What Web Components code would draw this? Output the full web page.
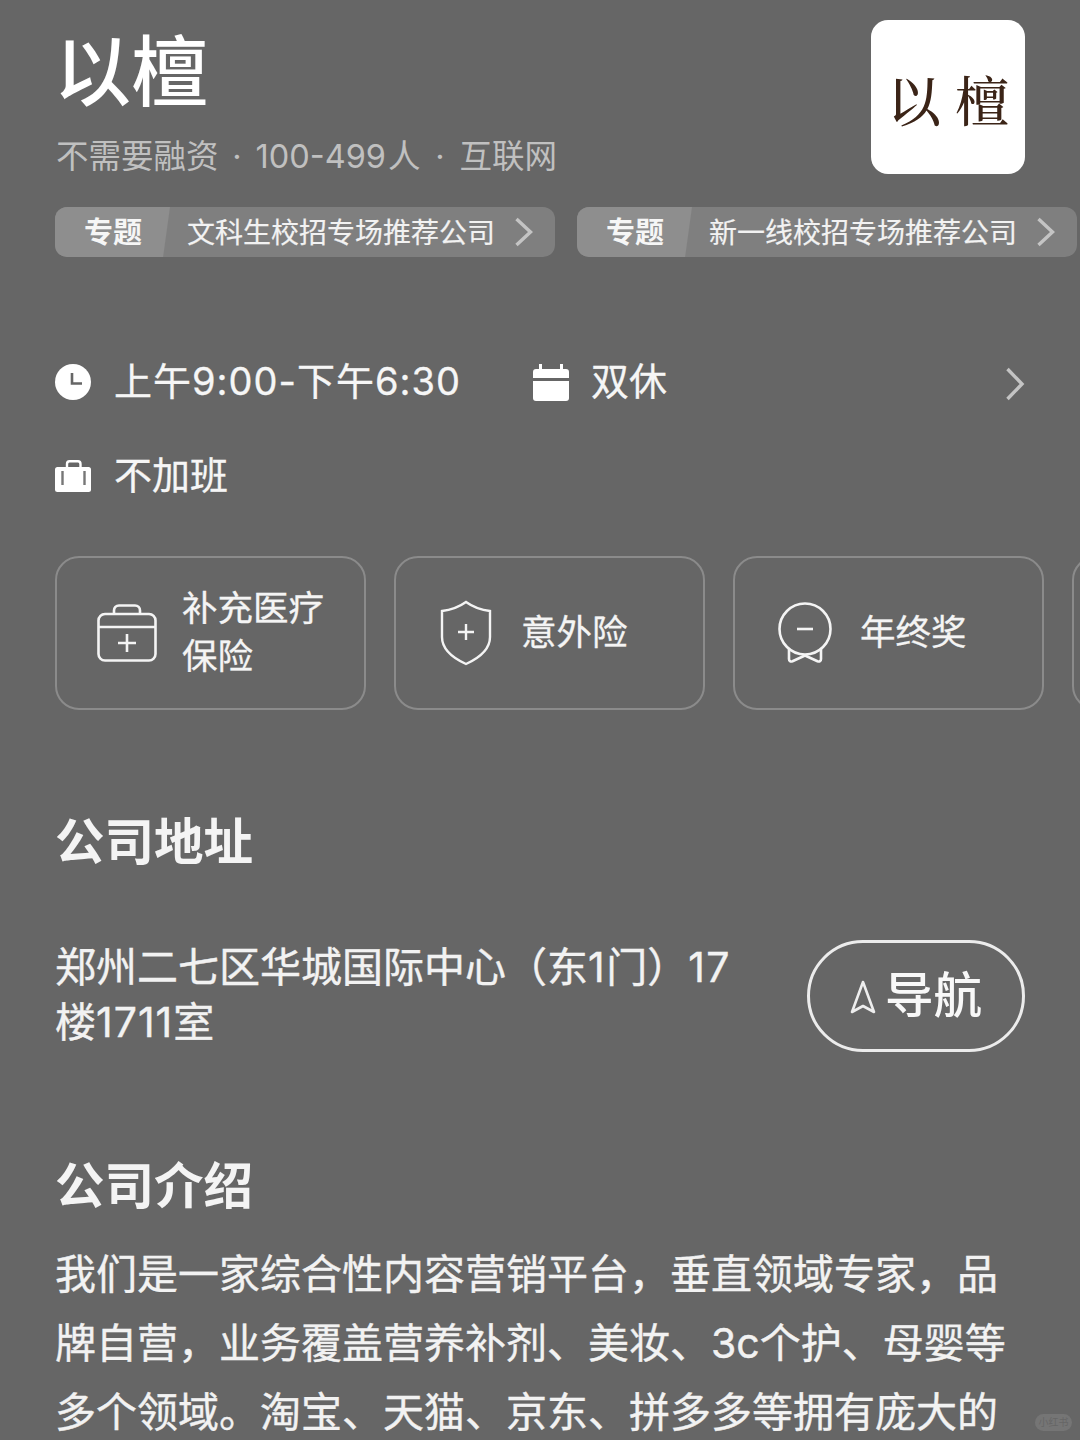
<!DOCTYPE html>
<html lang="zh-CN">
<head>
<meta charset="utf-8">
<title>以檀</title>
<style>
  html, body { margin: 0; height: 1440px; overflow: hidden; background: #666; }
  body { font-family: Inter, "Noto Sans CJK SC", sans-serif; color: #f4f4f4; }
</style>
</head>
<body>
<company-page>
  <company-header name="以檀" logo="以 檀"></company-header>
  <tag-row>
    <topic-tag>文科生校招专场推荐公司</topic-tag>
    <topic-tag>新一线校招专场推荐公司</topic-tag>
  </tag-row>
  <work-info></work-info>
  <benefit-row>
    <benefit-card icon="kit">补充医疗<br>保险</benefit-card>
    <benefit-card icon="shield">意外险</benefit-card>
    <benefit-card icon="medal">年终奖</benefit-card>
    <benefit-card></benefit-card>
  </benefit-row>
  <section-title style="margin-top:102px">公司地址</section-title>
  <address-block>郑州二七区华城国际中心（东<span style="letter-spacing:1.5px">1</span>门）<span style="letter-spacing:1.5px">17</span>楼<span style="letter-spacing:1px">1711</span>室</address-block>
  <section-title style="margin-top:104px">公司介绍</section-title>
  <intro-text>我们是一家综合性内容营销平台，垂直领域专家，品牌自营，业务覆盖营养补剂、美妆、3c个护、母婴等多个领域。淘宝、天猫、京东、拼多多等拥有庞大的</intro-text>
  <water-mark>小红书</water-mark>
</company-page>

<script>
const FONT = 'Inter, "Noto Sans CJK SC", sans-serif';

function define(tag, css, html, setup) {
  customElements.define(tag, class extends HTMLElement {
    constructor() {
      super();
      this.attachShadow({ mode: "open" });
    }
    connectedCallback() {
      const markup = typeof html === "function" ? html(this) : html;
      this.shadowRoot.innerHTML = `<style>${css}</style>${markup}`;
      if (setup) setup(this);
    }
  });
}

const ICONS = {
  kit: `<svg width="60" height="58" viewBox="0 0 60 58" fill="none" stroke="#f4f4f4" stroke-width="2.6">
    <path d="M17 10V6.500C17 3.500 19 1.500 22 1.500H38C41 1.500 43 3.500 43 6.500V10"/>
    <rect x="1.500" y="10" width="57" height="46.500" rx="6.500"/>
    <path d="M1.500 23H58.500M30 30V48M21 39H39"/>
  </svg>`,
  shield: `<svg width="52" height="66" viewBox="0 0 52 66" fill="none" stroke="#f4f4f4" stroke-width="2.4">
    <path d="M26 2C33 7 41 10 50 11V37C50 51 37 59 26 64C15 59 2 51 2 37V11C11 10 19 7 26 2Z"/>
    <path d="M26 24V40M18 32H34"/>
  </svg>`,
  medal: `<svg width="56" height="62" viewBox="0 0 56 62" fill="none" stroke="#f4f4f4" stroke-width="2.6">
    <circle cx="28" cy="27" r="25.500"/>
    <path d="M20 27H36"/>
    <path d="M12 47V57C12 59 13.500 60 15.500 59.200L28 53.500L40.500 59.200C42.500 60 44 59 44 57V47"/>
  </svg>`
};

define("company-page", `
  :host { display: block; position: relative; height: 1440px; overflow: hidden; }
`, `<slot></slot>`);

define("company-header", `
  :host { display: flex; justify-content: space-between; align-items: flex-start; padding: 20px 55px 0 55px; }
  .left { padding-top: 12px; }
  h1 { margin: 0 0 0 -1px; font: 500 77px/80px ${FONT}; color: #fff; }
  p { margin: 23px 0 0 1px; font: 400 32.5px/44px ${FONT}; color: #c0c0c0; white-space: pre; }
  .dot { display: inline-block; width: 37px; text-align: center; }
  .dot.wide { width: 39px; }
  .ren { margin-left: 2px; }
  .logo { width: 154px; height: 154px; border-radius: 17px; background: #fff; display: flex; align-items: center; justify-content: center; padding-top: 4px; box-sizing: border-box;
    font: 500 54px/1 "Noto Serif CJK SC", "Noto Sans CJK SC", serif; color: #3b2417; white-space: pre; }
`, el => `
  <div class="left">
    <h1>${el.getAttribute("name")}</h1>
    <p>不需要融资<span class="dot">·</span>100-499<span class="ren">人</span><span class="dot wide">·</span>互联网</p>
  </div>
  <div class="logo">${el.getAttribute("logo")}</div>
`);

define("tag-row", `
  :host { display: flex; gap: 22px; padding-left: 55px; margin-top: 28px; }
`, `<slot></slot>`);

define("topic-tag", `
  :host { display: flex; flex: 0 0 500px; height: 50px; align-items: center; position: relative; border-radius: 12px; background: #7f7f7f; overflow: hidden; box-sizing: border-box; }
  .label { position: absolute; left: 0; top: 0; height: 100%; width: 115px; background: #8e8e8e; clip-path: polygon(0 0, 100% 0, 94% 100%, 0 100%);
    display: flex; align-items: center; padding-left: 29px; box-sizing: border-box; font: 700 29px/1 ${FONT}; color: #f6f6f6; }
  .text { margin-left: 132px; font: 400 28px/50px ${FONT}; color: #f2f2f2; white-space: nowrap; padding-top: 1px; -webkit-text-stroke: 0.2px #f2f2f2; }
  svg { position: absolute; left: 459px; top: 10px; }
`, `
  <div class="label">专题</div>
  <div class="text"><slot></slot></div>
  <svg width="20" height="30" viewBox="0 0 20 30" fill="none" stroke="#c4c4c4" stroke-width="3.4"><path d="M2.500 2L16.500 15L2.500 28"/></svg>
`);

define("work-info", `
  :host { display: block; padding: 0 55px; margin-top: 100px; font: 400 38px/48px ${FONT}; color: #f6f6f6; -webkit-text-stroke: 0.3px #f6f6f6; }
  .row { display: flex; align-items: center; height: 48px; }
  .row + .row { margin-top: 46px; }
  .row > svg, .item svg { position: relative; top: 1px; }
  .item { display: flex; align-items: center; gap: 23px; white-space: nowrap; }
  .time { flex: 0 0 478px; }
  .time span { letter-spacing: 1px; }
  .item + .item { gap: 22px; }
  .more { margin-left: auto; margin-top: 4px; }
  svg { display: block; flex: none; }
`, `
  <div class="row">
    <div class="item time">
      <svg width="36" height="36" viewBox="0 0 36 36"><circle cx="18" cy="18" r="18" fill="#fff"/><path d="M17 9V19.500H27" fill="none" stroke="#666" stroke-width="2.600"/></svg>
      <span>上午9:00-下午6:30</span>
    </div>
    <div class="item">
      <svg width="36" height="37" viewBox="0 0 36 37" fill="#fff">
        <path d="M6 0h3v5h18v-5h3v5h3c2 0 3 1 3 3v6H0v-6c0-2 1-3 3-3h3z"/>
        <path d="M0 17h36v17c0 2-1 3-3 3H3c-2 0-3-1-3-3z"/>
      </svg>
      <span>双休</span>
    </div>
    <svg class="more" width="20" height="34" viewBox="0 0 20 34" fill="none" stroke="#c4c4c4" stroke-width="3.400"><path d="M2.500 2L17 17L2.500 32"/></svg>
  </div>
  <div class="row">
    <div class="item">
      <svg width="36" height="32" viewBox="0 0 36 32">
        <path fill="none" stroke="#fff" stroke-width="2.400" d="M12 8V4C12 2.500 13 1.200 14.500 1.200H23C24.500 1.200 25.500 2.500 25.500 4V8"/>
        <rect y="7" width="36" height="25" rx="2.500" fill="#fff"/>
        <path d="M7.500 11V25M29.500 11V25" stroke="#777" stroke-width="2.400"/>
      </svg>
      <span>不加班</span>
    </div>
  </div>
`);

define("benefit-row", `
  :host { display: flex; gap: 28px; padding-left: 55px; margin-top: 57px; }
`, `<slot></slot>`);

define("benefit-card", `
  :host { display: flex; flex: 0 0 311px; height: 154px; box-sizing: border-box; align-items: center; border: 2px solid #8b8b8b; border-radius: 24px; color: #f4f4f4; font: 400 35.5px/48px ${FONT}; -webkit-text-stroke: 0.3px #f4f4f4; }
  .icon { flex: 0 0 125px; display: flex; justify-content: center; padding-left: 15px; box-sizing: border-box; }
  svg { display: block; }
`, el => `
  <div class="icon">${ICONS[el.getAttribute("icon")] || ""}</div>
  <div><slot></slot></div>
`);

define("section-title", `
  :host { display: block; padding-left: 55px; font: 700 49.5px/60px ${FONT}; color: #f4f4f4; }
`, `<slot></slot>`);

define("address-block", `
  :host { display: flex; justify-content: space-between; align-items: flex-start; padding: 0 55px; margin-top: 68px; }
  .text { width: 691px; font: 400 41px/55px ${FONT}; color: #f2f2f2; -webkit-text-stroke: 0.4px #f2f2f2; }
  .nav { box-sizing: border-box; width: 218px; height: 112px; border: 3px solid #ececec; border-radius: 56px; display: flex; align-items: center; justify-content: center; gap: 9px; font: 500 48.5px/1 ${FONT}; color: #f8f8f8; }
  svg { display: block; margin-top: 2px; }
`, `
  <div class="text"><slot></slot></div>
  <div class="nav">
    <svg width="26" height="34" viewBox="0 0 26 34" fill="none" stroke="#eee" stroke-width="2.600" stroke-linejoin="round"><path d="M13 2L2 32L13 26L24 32Z"/></svg>
    <span>导航</span>
  </div>
`);

define("intro-text", `
  :host { display: block; padding: 0 55px; margin-top: 24px; font: 400 41px/69px ${FONT}; color: #f2f2f2; -webkit-text-stroke: 0.4px #f2f2f2; }
`, `<slot></slot>`);

define("water-mark", `
  :host { position: absolute; left: 1035px; top: 1414px; width: 37px; height: 17px; border-radius: 9px; background: #757575; color: #666; font: 400 10px/17px ${FONT}; text-align: center; }
`, `<slot></slot>`);
</script>
</body>
</html>
